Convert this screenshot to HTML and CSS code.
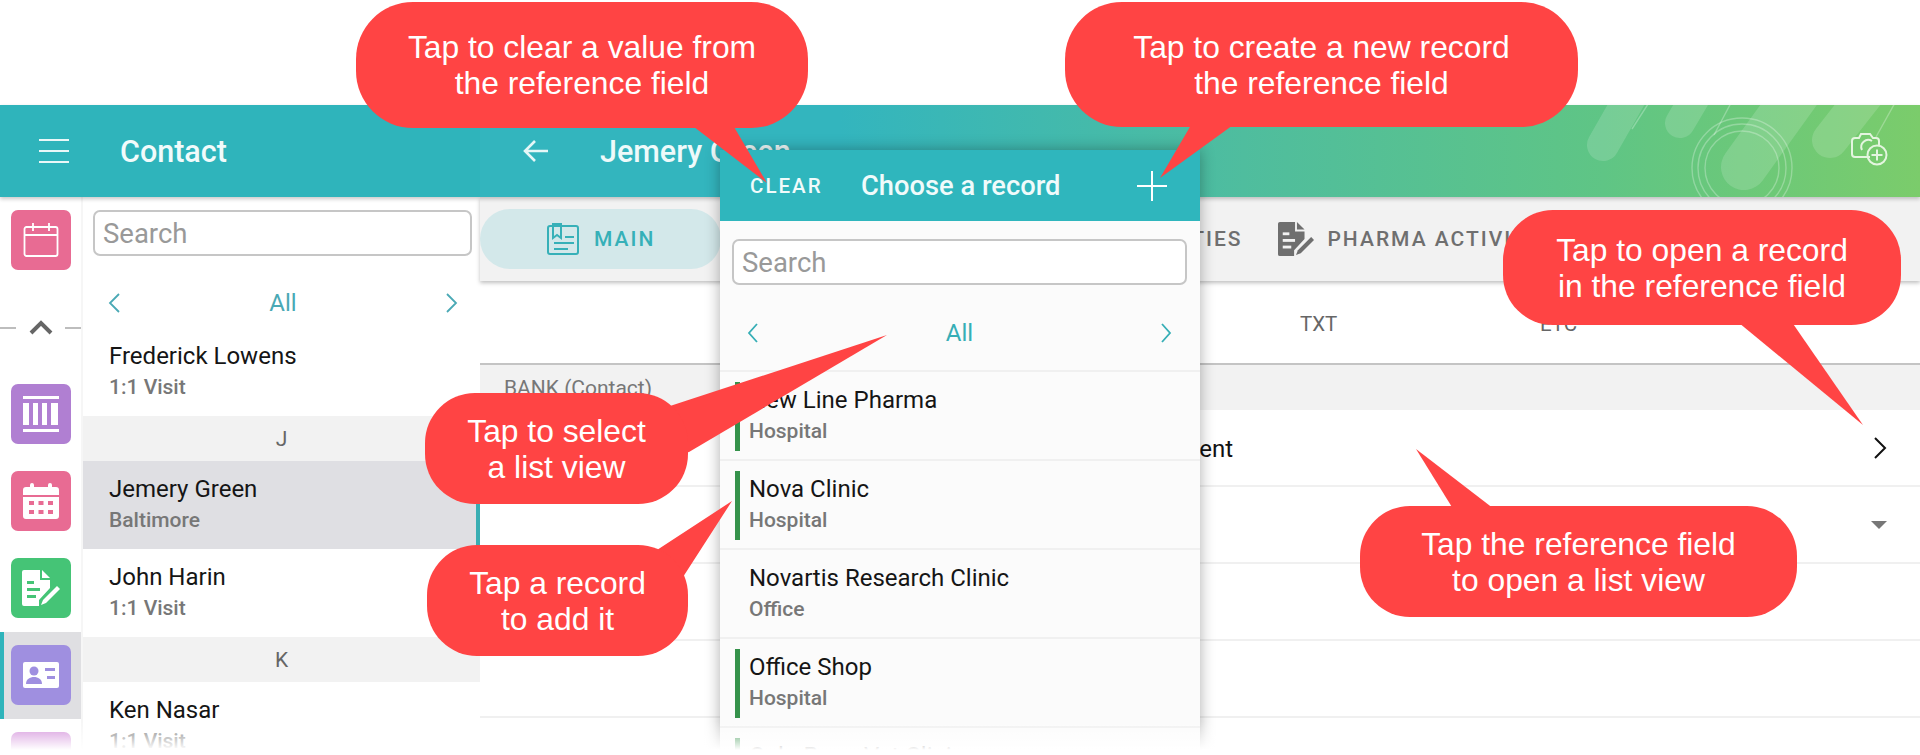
FILE: index.html
```html
<!DOCTYPE html>
<html lang="en">
<head>
    <meta charset="UTF-8">
    <meta name="viewport" content="width=device-width, initial-scale=1.0">
    <title>Reference field</title>
    <link rel="stylesheet" href="styles.css">
</head>
<body>
<div class="page">
  <div class="topbar">
    <div class="topbar-left">
      <div class="burger"><span></span><span></span><span></span></div>
      <div class="module-title">Contact</div>
    </div>
    <div class="topbar-main">
      <svg class="header-art" width="420" height="92" viewBox="0 0 420 92">
        <g stroke="#fff" stroke-opacity=".15" stroke-linecap="round" fill="none">
          <path d="M135 -16L103 40" stroke-width="32"/>
          <path d="M200 -16L180 18" stroke-width="30"/>
          <path d="M300 -16L244 62" stroke-width="46"/>
          <path d="M370 -16L330 35" stroke-width="36"/>
        </g>
        <g stroke="#fff" stroke-opacity=".28" fill="none" stroke-width="1.4">
          <circle cx="242" cy="63" r="50"/>
          <circle cx="242" cy="63" r="44"/>
          <circle cx="242" cy="63" r="37"/>
          <path d="M150 -4L132 24M232 -4L214 30M396 -4L376 32"/>
        </g>
      </svg>
      <svg class="back-arrow" width="26" height="24" viewBox="0 0 26 24">
        <path d="M25 12H3M12 2L2 12l10 10" fill="none" stroke="#e6f7f7" stroke-width="2.6"/>
      </svg>
      <div class="record-title">Jemery Green</div>
      <svg class="camera-add" width="38" height="34" viewBox="0 0 38 34">
        <g fill="none" stroke="#e4f5df" stroke-width="2">
          <path d="M20 25H5a3 3 0 0 1-3-3V9a3 3 0 0 1 3-3h4l2-4h9l3 4h3a3 3 0 0 1 3 3v4"/>
          <path d="M12 18a7 7 0 0 1 10-9"/>
          <circle cx="27" cy="23" r="9.5"/>
          <path d="M27 17.5v11M21.500 23h11"/>
        </g>
      </svg>
    </div>
  </div>

  <div class="app">
    <div class="rail">
      <div class="rail-item">
        <div class="rail-icon pink">
          <svg width="36" height="36" viewBox="0 0 36 36"><g fill="none" stroke="#fff" stroke-width="1.800"><rect x="1.500" y="5" width="33" height="29" rx="2"/><path d="M1.500 13h33M10 1v8M26 1v8"/></g></svg>
        </div>
      </div>
      <div class="rail-collapse">
        <span class="dash"></span>
        <svg width="24" height="15" viewBox="0 0 24 15"><path d="M2 13L12 3l10 10" fill="none" stroke="#666" stroke-width="4"/></svg>
        <span class="dash"></span>
      </div>
      <div class="rail-item">
        <div class="rail-icon purple">
          <svg width="36" height="36" viewBox="0 0 36 36"><g fill="#fff"><rect x="0" y="0" width="36" height="3"/><rect x="0" y="33" width="36" height="3"/><rect x="0" y="7" width="6" height="22"/><rect x="10" y="7" width="5" height="22"/><rect x="19" y="7" width="5" height="22"/><rect x="28" y="7" width="7" height="22"/></g></svg>
        </div>
      </div>
      <div class="rail-item">
        <div class="rail-icon pink">
          <svg width="36" height="36" viewBox="0 0 36 36"><path fill="#fff" d="M9 0a2 2 0 0 1 2 2v2h14V2a2 2 0 0 1 4 0v2h4a3 3 0 0 1 3 3v5H0V7a3 3 0 0 1 3-3h4V2a2 2 0 0 1 2-2zM0 14h36v19a3 3 0 0 1-3 3H3a3 3 0 0 1-3-3z"/><g fill="#e86b93"><rect x="6" y="18" width="5" height="4"/><rect x="15.500" y="18" width="5" height="4"/><rect x="25" y="18" width="5" height="4"/><rect x="6" y="27" width="5" height="4"/><rect x="15.500" y="27" width="5" height="4"/><rect x="25" y="27" width="5" height="4"/></g></svg>
        </div>
      </div>
      <div class="rail-item">
        <div class="rail-icon green">
          <svg width="38" height="36" viewBox="0 0 38 36"><path fill="#fff" d="M2 0h16v10h10v8L17 30v6H2a2 2 0 0 1-2-2V2a2 2 0 0 1 2-2zM20 0l8 8h-8z"/><g fill="#45c476"><rect x="5" y="11" width="7" height="3"/><rect x="5" y="18" width="13" height="3"/><rect x="5" y="25" width="9" height="3"/></g><path fill="#fff" d="M35 16l3 3-14 14-5 2 2-5z"/></svg>
        </div>
      </div>
      <div class="rail-item is-active">
        <div class="rail-icon violet">
          <svg width="36" height="26" viewBox="0 0 36 26"><rect width="36" height="26" rx="2" fill="#fff"/><g fill="#9f8fe0"><circle cx="11" cy="9" r="4.500"/><path d="M3 22c0-5 4-7 8-7s8 2 8 7z"/><rect x="22" y="6" width="10" height="3"/><rect x="24" y="14" width="8" height="3"/></g></svg>
        </div>
      </div>
      <div class="rail-item">
        <div class="rail-icon orchid"></div>
      </div>
    </div>

    <div class="contacts">
      <div class="search-wrap"><div class="search">Search</div></div>
      <div class="list-nav">
        <svg width="14" height="22" viewBox="0 0 14 22"><path d="M12 2L3 11l9 9" fill="none" stroke="#4aa9b5" stroke-width="1.800"/></svg>
        <span>All</span>
        <svg width="14" height="22" viewBox="0 0 14 22"><path d="M2 2l9 9-9 9" fill="none" stroke="#4aa9b5" stroke-width="1.800"/></svg>
      </div>
      <div class="person"><div class="name">Frederick Lowens</div><div class="sub">1:1 Visit</div></div>
      <div class="letter">J</div>
      <div class="person is-current"><div class="name">Jemery Green</div><div class="sub">Baltimore</div></div>
      <div class="person"><div class="name">John Harin</div><div class="sub">1:1 Visit</div></div>
      <div class="letter">K</div>
      <div class="person"><div class="name">Ken Nasar</div><div class="sub">1:1 Visit</div></div>
    </div>

    <div class="detail">
      <div class="tabs">
        <div class="tab tab-main">
          <svg width="32" height="32" viewBox="0 0 32 32"><g fill="none" stroke="#36b0b8" stroke-width="2"><rect x="1" y="3" width="30" height="28" rx="2"/><path d="M6 3V1h8v14l-4-3-4 3zM18 14h9M7 20h20M7 26h14"/></g></svg>
          <span>MAIN</span>
        </div>
        <div class="tab tab-activities"><span>ACTIVITIES</span></div>
        <div class="tab tab-pharma">
          <svg width="36" height="36" viewBox="0 0 38 36"><path fill="#6f6f6f" d="M2 0h16v10h10v8L17 30v6H2a2 2 0 0 1-2-2V2a2 2 0 0 1 2-2zM20 0l8 8h-8z"/><g fill="#f2f2f2"><rect x="5" y="11" width="7" height="3"/><rect x="5" y="18" width="13" height="3"/><rect x="5" y="25" width="9" height="3"/></g><path fill="#6f6f6f" d="M35 16l3 3-14 14-5 2 2-5z"/></svg>
          <span>PHARMA ACTIVITIES</span>
        </div>
      </div>
      <div class="columns">
        <div class="column">TXT</div>
        <div class="column">ETC</div>
      </div>
      <div class="group-row">BANK (Contact)</div>
      <div class="field">
        <span class="field-value">Appointment</span>
        <svg width="14" height="22" viewBox="0 0 14 22"><path d="M2 1l10 10L2 21" fill="none" stroke="#111" stroke-width="2"/></svg>
      </div>
      <div class="field">
        <span class="field-value"></span>
        <span class="caret"></span>
      </div>
      <div class="field"></div>
      <div class="field"></div>
    </div>
  </div>

  <div class="picker">
    <div class="picker-head">
      <span class="clear">CLEAR</span>
      <span class="picker-title">Choose a record</span>
      <svg width="30" height="30" viewBox="0 0 30 30"><path d="M15 0v30M0 15h30" stroke="#fff" stroke-width="2"/></svg>
    </div>
    <div class="picker-search"><div class="search">Search</div></div>
    <div class="list-nav picker-nav">
      <svg width="14" height="22" viewBox="0 0 14 22"><path d="M11 2L3 11l8 9" fill="none" stroke="#36aeb6" stroke-width="1.800"/></svg>
      <span>All</span>
      <svg width="14" height="22" viewBox="0 0 14 22"><path d="M3 2l8 9-8 9" fill="none" stroke="#36aeb6" stroke-width="1.800"/></svg>
    </div>
    <div class="pick marked"><div class="name">New Line Pharma</div><div class="sub">Hospital</div></div>
    <div class="pick marked"><div class="name">Nova Clinic</div><div class="sub">Hospital</div></div>
    <div class="pick"><div class="name">Novartis Research Clinic</div><div class="sub">Office</div></div>
    <div class="pick marked"><div class="name">Office Shop</div><div class="sub">Hospital</div></div>
    <div class="pick marked"><div class="name">Oslo Bone Vet Clinic</div></div>
  </div>

  <div class="bottom-fade"></div>

  <svg class="tails" width="1920" height="755" viewBox="0 0 1920 755">
    <polygon points="685,120 730,120 767,183"/>
    <polygon points="1194,120 1240,120 1160,178"/>
    <polygon points="1733,318 1789,318 1863,425"/>
    <polygon points="1455,512 1498,512 1416,449"/>
    <polygon points="650,420 670,406 887,335 689,452 660,460"/>
    <polygon points="640,560 657,550 732,501 683,577 660,590"/>
  </svg>
  <div class="bubble bubble-clear">Tap to clear a value from<br>the reference field</div>
  <div class="bubble bubble-create">Tap to create a new record<br>the reference field</div>
  <div class="bubble bubble-open">Tap to open a record<br>in the reference field</div>
  <div class="bubble bubble-view">Tap to select<br>a list view</div>
  <div class="bubble bubble-add">Tap a record<br>to add it</div>
  <div class="bubble bubble-field">Tap the reference field<br>to open a list view</div>
</div>
</body>
</html>
```

FILE: styles.css
```css
* {
  box-sizing: border-box;
}
html, body {
  margin: 0;
  padding: 0;
  background: #fff;
}
.page {
  position: relative;
  width: 1920px;
  height: 755px;
  padding-top: 105px;
  overflow: hidden;
  font-family: Roboto, "Liberation Sans", sans-serif;
  color: #151515;
}

/* top bar */
.topbar {
  display: flex;
  height: 92px;
  position: relative;
  z-index: 2;
  box-shadow: 0 2px 4px rgba(0, 0, 0, .22);
}
.topbar-left {
  width: 480px;
  display: flex;
  align-items: center;
  padding-left: 39px;
  background: #2fb4bb;
}
.burger {
  width: 30px;
  display: flex;
  flex-direction: column;
  gap: 9px;
}
.burger span {
  height: 2px;
  background: #eaf8f8;
}
.module-title {
  margin-left: 51px;
  font-size: 30.500px;
  font-weight: 500;
  color: #f1fbfb;
}
.topbar-main {
  flex: 1;
  position: relative;
  display: flex;
  align-items: center;
  padding-left: 43px;
  background: linear-gradient(90deg, #33b5be 0%, #33b5be 25%, #4fbd9e 53%, #5fc585 78%, #7bcc6b 100%);
  overflow: hidden;
}
.header-art {
  position: absolute;
  right: 0;
  top: 0;
}
.record-title {
  margin-left: 51px;
  font-size: 30.500px;
  font-weight: 500;
  color: #eefafa;
}
.camera-add {
  position: absolute;
  right: 32px;
  top: 27px;
}

/* app body */
.app {
  display: flex;
  height: 650px;
}
.rail {
  width: 83px;
  flex-shrink: 0;
  background: #fff;
  overflow: hidden;
  border-right: 2px solid #f6f6f6;
}
.rail-item {
  height: 87px;
  padding: 13px 0 0 11px;
}
.rail-item.is-active {
  background: #dfdfe2;
  box-shadow: inset 4px 0 0 #2fb4bb;
}
.rail-icon {
  width: 60px;
  height: 60px;
  border-radius: 7px;
  display: flex;
  align-items: center;
  justify-content: center;
}
.pink { background: #e86b93; }
.purple { background: #b07fd2; }
.green { background: #45c476; }
.violet { background: #9f8fe0; }
.orchid { background: #d18bd9; }
.rail-collapse {
  height: 87px;
  display: flex;
  align-items: center;
  justify-content: space-between;
  width: 81px;
}
.dash {
  width: 16px;
  height: 2px;
  background: #bdbdbd;
}

/* contact list */
.contacts {
  width: 397px;
  flex-shrink: 0;
  background: #fff;
  overflow: hidden;
}
.search-wrap {
  padding: 13px 8px 0 10px;
}
.search {
  height: 46px;
  border: 2px solid #c6c6c6;
  border-radius: 7px;
  padding-left: 8px;
  background: #fff;
  color: #999;
  font-size: 27.500px;
  line-height: 43px;
}
.list-nav {
  height: 72px;
  display: flex;
  align-items: center;
  justify-content: space-between;
  padding: 22px 21px 0 24px;
  color: #4aa9b5;
  font-size: 24px;
}
.person {
  height: 88px;
  padding: 15px 0 0 26px;
}
.person.is-current {
  background: #dfdfe3;
  box-shadow: inset -4px 0 0 #3aaeb3;
}
.name {
  font-size: 24px;
  line-height: 26px;
}
.sub {
  margin-top: 5px;
  font-size: 21px;
  font-weight: 500;
  line-height: 26px;
  color: #777;
}
.letter {
  height: 45px;
  background: #f2f2f2;
  text-align: center;
  font-size: 21px;
  line-height: 47px;
  color: #666;
}

/* record detail */
.detail {
  flex: 1;
  background: #fff;
}
.tabs {
  height: 84px;
  display: flex;
  align-items: flex-start;
  padding-top: 12px;
  background: #f2f2f2;
  box-shadow: 0 2px 4px rgba(0, 0, 0, .25);
  position: relative;
  white-space: nowrap;
  overflow: hidden;
}
.tab {
  height: 60px;
  display: flex;
  align-items: center;
  gap: 13px;
  font-size: 21px;
  font-weight: 500;
  letter-spacing: 2px;
  color: #6f6f6f;
}
.tab-main {
  width: 241px;
  padding-left: 67px;
  gap: 15px;
  border-radius: 30px;
  background: #d3e8ea;
  color: #36b0b8;
}
.tab-activities {
  margin-left: 393px;
}
.tab-pharma {
  margin-left: 36px;
}
.columns {
  height: 84px;
  display: flex;
  padding: 31px 0 0 820px;
  border-bottom: 2px solid #c4c4c4;
  background: #fff;
}
.column {
  width: 240px;
  font-size: 20.500px;
  color: #666;
}
.group-row {
  height: 45px;
  padding-left: 24px;
  background: #f2f2f2;
  font-size: 21px;
  line-height: 47px;
  color: #777;
}
.field {
  height: 77px;
  display: flex;
  align-items: center;
  justify-content: space-between;
  padding-right: 33px;
  border-bottom: 2px solid #f0f0f0;
}
.field-value {
  margin-left: 615px;
  padding-top: 3px;
  font-size: 24px;
  color: #111;
}
.caret {
  width: 0;
  height: 0;
  border-left: 8px solid transparent;
  border-right: 8px solid transparent;
  border-top: 8px solid #777;
}

/* record picker dialog */
.picker {
  position: absolute;
  left: 720px;
  top: 150px;
  width: 480px;
  height: 620px;
  z-index: 3;
  background: #fbfbfb;
  box-shadow: 0 0 14px rgba(0, 0, 0, .32);
}
.picker-head {
  height: 71px;
  display: flex;
  align-items: center;
  padding: 0 33px 0 30px;
  background: #2fb6bd;
  color: #f0fbfb;
}
.clear {
  width: 111px;
  font-size: 20.500px;
  font-weight: 500;
  letter-spacing: 2px;
}
.picker-title {
  flex: 1;
  font-size: 27.300px;
  font-weight: 500;
}
.picker-search {
  padding: 18px 13px 0 12px;
}
.picker-nav {
  height: 87px;
  border-bottom: 2px solid #f0f0f0;
  padding: 10px 27px 0 26px;
  color: #36aeb6;
}
.pick {
  height: 89px;
  padding: 15px 0 0 29px;
  position: relative;
  border-bottom: 2px solid #f0f0f0;
}
.pick.marked::before {
  content: "";
  position: absolute;
  left: 15px;
  top: 10px;
  width: 5px;
  height: 69px;
  background: #35924b;
}
.bottom-fade {
  position: absolute;
  left: 0;
  right: 0;
  bottom: 0;
  height: 34px;
  z-index: 4;
  background: linear-gradient(rgba(255, 255, 255, 0), #fff 85%);
}

/* callouts */
.tails {
  position: absolute;
  left: 0;
  top: 0;
  z-index: 5;
  fill: #ff4444;
}
.bubble {
  position: absolute;
  z-index: 6;
  display: flex;
  align-items: center;
  justify-content: center;
  text-align: center;
  background: #ff4444;
  color: #fff;
  font-family: "Liberation Sans", Arial, sans-serif;
  font-size: 31.800px;
  line-height: 36px;
  border-radius: 50px;
}
.bubble-clear { left: 356px; top: 2px; width: 452px; height: 126px; border-radius: 57px; }
.bubble-create { left: 1065px; top: 2px; width: 513px; height: 125px; border-radius: 57px; }
.bubble-open { left: 1503px; top: 210px; width: 398px; height: 115px; }
.bubble-view { left: 425px; top: 393px; width: 263px; height: 111px; }
.bubble-add { left: 427px; top: 545px; width: 261px; height: 111px; }
.bubble-field { left: 1360px; top: 506px; width: 437px; height: 111px; }
```
